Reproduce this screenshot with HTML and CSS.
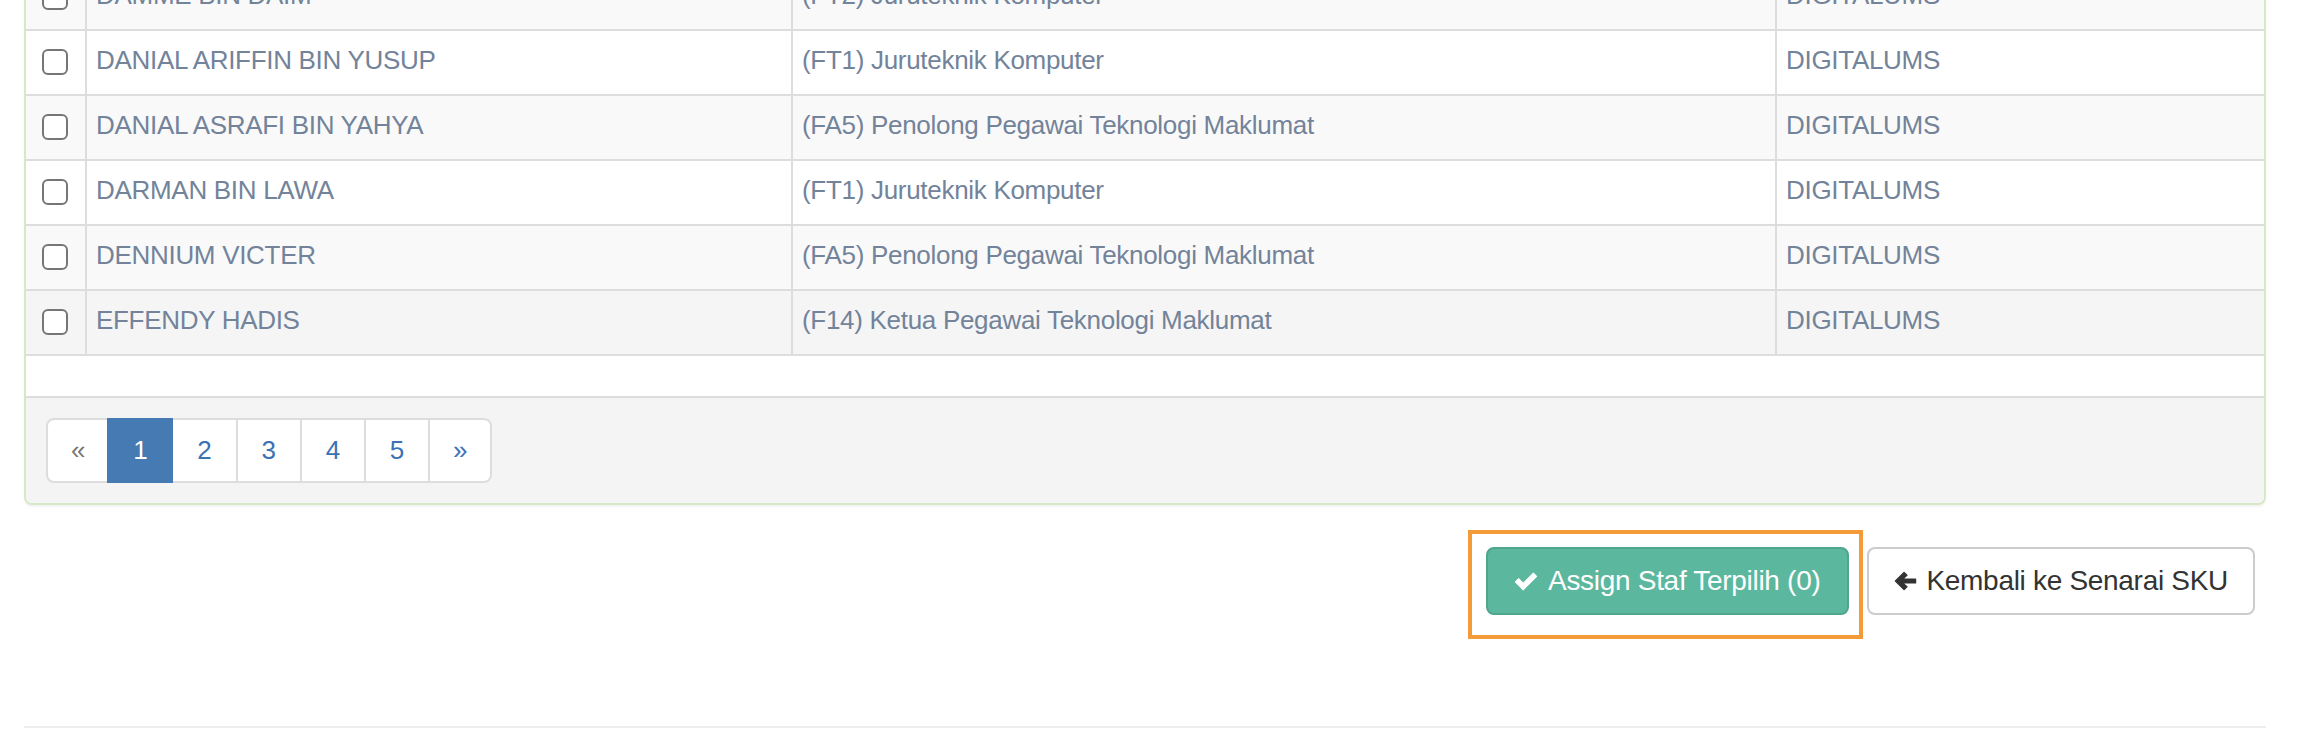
FILE: index.html
```html
<!DOCTYPE html>
<html lang="ms">
<head>
<meta charset="utf-8">
<title>Assign Staf</title>
<link rel="stylesheet" href="styles.css">
</head>
<body>
<div class="page">
  <div class="panel">
    <table class="staff-table">
      <tbody>
        <tr class="odd">
          <td class="c-check"><input type="checkbox" class="chk"></td>
          <td class="c-name">DAMME BIN DAIM</td>
          <td class="c-pos">(FT2) Juruteknik Komputer</td>
          <td class="c-unit">DIGITALUMS</td>
        </tr>
        <tr>
          <td class="c-check"><input type="checkbox" class="chk"></td>
          <td class="c-name">DANIAL ARIFFIN BIN YUSUP</td>
          <td class="c-pos">(FT1) Juruteknik Komputer</td>
          <td class="c-unit">DIGITALUMS</td>
        </tr>
        <tr class="odd">
          <td class="c-check"><input type="checkbox" class="chk"></td>
          <td class="c-name">DANIAL ASRAFI BIN YAHYA</td>
          <td class="c-pos">(FA5) Penolong Pegawai Teknologi Maklumat</td>
          <td class="c-unit">DIGITALUMS</td>
        </tr>
        <tr>
          <td class="c-check"><input type="checkbox" class="chk"></td>
          <td class="c-name">DARMAN BIN LAWA</td>
          <td class="c-pos">(FT1) Juruteknik Komputer</td>
          <td class="c-unit">DIGITALUMS</td>
        </tr>
        <tr class="odd">
          <td class="c-check"><input type="checkbox" class="chk"></td>
          <td class="c-name">DENNIUM VICTER</td>
          <td class="c-pos">(FA5) Penolong Pegawai Teknologi Maklumat</td>
          <td class="c-unit">DIGITALUMS</td>
        </tr>
        <tr class="hover">
          <td class="c-check"><input type="checkbox" class="chk"></td>
          <td class="c-name">EFFENDY HADIS</td>
          <td class="c-pos">(F14) Ketua Pegawai Teknologi Maklumat</td>
          <td class="c-unit">DIGITALUMS</td>
        </tr>
      </tbody>
    </table>
    <div class="panel-footer">
      <ul class="pagination">
        <li><span class="pg disabled">&laquo;</span></li>
        <li><span class="pg active">1</span></li>
        <li><a class="pg" href="#">2</a></li>
        <li><a class="pg" href="#">3</a></li>
        <li><a class="pg" href="#">4</a></li>
        <li><a class="pg" href="#">5</a></li>
        <li><a class="pg" href="#">&raquo;</a></li>
      </ul>
    </div>
  </div>

  <div class="actions">
    <button class="btn btn-success" type="button"><svg class="ico ico-check" viewBox="0 0 26 20" aria-hidden="true"><path d="M1.5 10.5 L5 7 L10 12 L21 1 L24.5 4.5 L10 19 Z" fill="#fff" stroke="#fff" stroke-width="1.2" stroke-linejoin="round"/></svg><span>Assign Staf Terpilih (0)</span><span class="highlight"></span></button>
    <button class="btn btn-default" type="button"><svg class="ico ico-arrow" viewBox="0 0 24 22" aria-hidden="true"><path d="M1.5 11 L10.5 2 L13.5 5 L9 9 H22.5 V13 H9 L13.5 17 L10.5 20 Z" fill="#333" stroke="#333" stroke-width="1.4" stroke-linejoin="round"/></svg><span>Kembali ke Senarai SKU</span></button>
  </div>

  <hr class="divider">
</div>
</body>
</html>
```

FILE: styles.css
```css
* { box-sizing: border-box; }

html, body {
  margin: 0;
  padding: 0;
  background: #fff;
}

body {
  font-family: "Liberation Sans", Arial, sans-serif;
  font-size: 26px;
  letter-spacing: -0.3px;
  color: #72839a;
}

.page {
  padding: 0 36px 0 24px;
}

.panel {
  margin-top: -34px;
  border: 2px solid #d6e9c6;
  border-top: none;
  border-radius: 0 0 8px 8px;
  background: #fff;
  box-shadow: 0 2px 2px rgba(0, 0, 0, 0.05);
  overflow: hidden;
}

.staff-table {
  width: 100%;
  table-layout: fixed;
  border-collapse: separate;
  border-spacing: 0;
  margin-bottom: 40px;
}

.staff-table td {
  padding: 11px 8px 15px 9px;
  line-height: 37px;
  border-bottom: 2px solid #ddd;
  border-left: 2px solid #ddd;
  vertical-align: top;
  white-space: nowrap;
}

.staff-table td.c-check {
  border-left: none;
  width: 59px;
  padding: 18px 0 0;
}

.staff-table td.c-name { width: 706px; }
.staff-table td.c-pos { width: 984px; }

.staff-table tr.odd td { background: #f9f9f9; }
.staff-table tr.hover td { background: #f5f5f5; }

.chk {
  -webkit-appearance: none;
  appearance: none;
  display: block;
  width: 26px;
  height: 26px;
  margin: 0 auto 0 16px;
  border: 2px solid #767676;
  border-radius: 6px;
  background: #fff;
}

.panel-footer {
  background: #f4f4f4;
  border-top: 2px solid #ddd;
  padding: 20px 20px;
}

.pagination {
  display: flex;
  list-style: none;
  margin: 0;
  padding: 0;
}

.pagination li { display: block; }

.pg {
  display: block;
  padding: 12px 24px;
  line-height: 37px;
  font-size: 26px;
  color: #3a72b3;
  text-decoration: none;
  background: #fff;
  border: 2px solid #ddd;
  margin-left: -2px;
}

.pagination li:first-child .pg {
  margin-left: 0;
  border-radius: 8px 0 0 8px;
  padding: 12px 22px 12px 23px;
}

.pagination li:last-child .pg {
  border-radius: 0 8px 8px 0;
  padding: 12px 23px 12px 23px;
}

.pg.disabled { color: #777; }

.pg.active {
  position: relative;
  z-index: 1;
  background: #457ab3;
  border-color: #457ab3;
  color: #fff;
}

.actions {
  display: flex;
  justify-content: flex-end;
  align-items: center;
  gap: 18px;
  margin-top: 42px;
  padding-right: 11px;
}

.btn {
  position: relative;
  display: inline-flex;
  align-items: center;
  gap: 9px;
  font-family: "Liberation Sans", Arial, sans-serif;
  font-size: 28px;
  letter-spacing: -0.3px;
  line-height: 40px;
  padding: 12px 24px;
  border: 2px solid transparent;
  border-radius: 8px;
  white-space: nowrap;
  cursor: pointer;
}

.btn-success {
  background: #5bb79e;
  border-color: #4ea68d;
  color: #fff;
  gap: 10px;
  padding: 12px 27px 12px 26px;
}

.btn-default {
  background: #fff;
  border-color: #ccc;
  color: #333;
  padding: 12px 25px 12px 25px;
}

.ico { display: block; flex: none; }
.ico-check { width: 24px; height: 19px; }
.ico-arrow { width: 23px; height: 22px; }

.highlight {
  position: absolute;
  left: -20px;
  top: -19px;
  right: -16px;
  bottom: -26px;
  border: 4px solid #f29b38;
  pointer-events: none;
}

.divider {
  margin: 111px 0 0;
  border: 0;
  border-top: 2px solid #eee;
  height: 0;
}
```
